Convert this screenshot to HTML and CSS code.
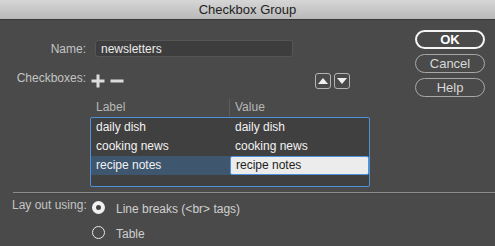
FILE: index.html
```html
<!DOCTYPE html>
<html>
<head>
<meta charset="utf-8">
<link rel="stylesheet" href="styles.css">
</head>
<body>
<div class="titlebar">Checkbox Group</div>
<div class="content">
  <div class="top">
    <div class="form">
      <div class="row name-row">
        <span class="lbl">Name:</span>
        <div class="input">newsletters</div>
      </div>
      <div class="row cb-row">
        <span class="lbl cb-lbl">Checkboxes:</span>
        <div class="pm">
          <svg class="plus" width="14" height="14" viewBox="0 0 14 14"><path d="M7 0.5V13.5M0.5 7H13.5" stroke="#dcdcdc" stroke-width="3"/></svg>
          <svg class="minus" width="14" height="14" viewBox="0 0 14 14"><path d="M0.5 7H13.5" stroke="#dcdcdc" stroke-width="3"/></svg>
        </div>
        <div class="arrows">
          <div class="abtn"><svg width="10" height="6" viewBox="0 0 10 6"><path d="M0 6L5 0L10 6Z" fill="#f0f0f0"/></svg></div>
          <div class="abtn"><svg width="10" height="6" viewBox="0 0 10 6"><path d="M0 0L5 6L10 0Z" fill="#f0f0f0"/></svg></div>
        </div>
      </div>
      <div class="row grid-row">
        <span class="lbl"></span>
        <div class="grid">
          <div class="headers">
            <span class="h-label">Label</span>
            <span class="h-value">Value</span>
          </div>
          <div class="list">
            <div class="lrow"><span class="c1">daily dish</span><span class="c2">daily dish</span></div>
            <div class="lrow"><span class="c1">cooking news</span><span class="c2">cooking news</span></div>
            <div class="lrow sel"><span class="c1">recipe notes</span><span class="c2 edit">recipe notes</span></div>
          </div>
        </div>
      </div>
    </div>
    <div class="buttons">
      <div class="btn default">OK</div>
      <div class="btn">Cancel</div>
      <div class="btn">Help</div>
    </div>
  </div>
  <div class="sep"></div>
  <div class="layout">
    <span class="lay-lbl">Lay out using:</span>
    <div class="radios">
      <div class="radio-row"><span class="radio on"></span><span class="rtext">Line breaks (&lt;br&gt; tags)</span></div>
      <div class="radio-row r2"><span class="radio"></span><span class="rtext">Table</span></div>
    </div>
  </div>
</div>
</body>
</html>
```

FILE: styles.css
```css
* { box-sizing: border-box; }
html, body { margin: 0; padding: 0; }
body {
  width: 495px;
  height: 246px;
  overflow: hidden;
  background: #4a4a4a;
  font-family: "Liberation Sans", Arial, sans-serif;
  font-size: 12px;
  color: #e6e6e6;
}
.titlebar {
  height: 20px;
  line-height: 19px;
  text-align: center;
  font-size: 13px;
  color: #1e1e1e;
  background: linear-gradient(#d6d6d6, #b9b9b9);
  border-bottom: 1px solid #3a3a3a;
}
.top {
  display: flex;
  justify-content: space-between;
}
.form {
  padding-top: 20px;
  width: 380px;
}
.row {
  display: flex;
  align-items: center;
}
.lbl {
  width: 86px;
  flex: none;
  text-align: right;
  color: #c4c4c4;
}
.name-row { height: 17px; }
.input {
  margin-left: 9px;
  width: 198px;
  height: 17px;
  line-height: 16px;
  padding-left: 5px;
  background: #3d3d3d;
  border: 1px solid #555;
  border-radius: 3px;
  color: #ececec;
}
.cb-row {
  margin-top: 16px;
  height: 16px;
}
.cb-lbl { position: relative; top: -3px; }
.pm {
  display: flex;
  gap: 5px;
  margin-left: 5px;
}
.pm svg { display: block; }
.arrows {
  display: flex;
  gap: 3px;
  margin-left: auto;
  margin-right: 30px;
}
.abtn {
  width: 16px;
  height: 16px;
  border: 1px solid #b4b4b4;
  border-radius: 3px;
  display: flex;
  align-items: center;
  justify-content: center;
}
.grid-row { margin-top: 10px; align-items: flex-start; }
.grid { margin-left: 4px; width: 280px; }
.headers {
  display: flex;
  height: 17px;
  line-height: 17px;
  color: #b8b8b8;
}
.h-label { width: 140px; padding-left: 6px; border-right: 1px solid #5e5e5e; }
.h-value { padding-left: 5px; }
.list {
  margin-top: 1px;
  height: 70px;
  border: 1px solid #4c93dc;
  border-radius: 2px;
  background: #404040;
  padding-top: 0;
}
.lrow {
  display: flex;
  height: 19px;
  line-height: 19px;
  color: #f2f2f2;
}
.c1 { width: 139px; padding-left: 5px; }
.c2 { flex: 1; padding-left: 5px; }
.sel .c1 { background: #3e566e; }
.sel .edit {
  background: #ececec;
  color: #1e1e1e;
  border: 1px solid #4c93dc;
  border-radius: 2px;
  line-height: 17px;
  padding-left: 5px;
}
.buttons {
  padding-top: 10px;
  padding-right: 10px;
  display: flex;
  flex-direction: column;
  gap: 5px;
}
.btn {
  width: 70px;
  height: 19px;
  line-height: 17px;
  border: 1px solid #a8a8a8;
  border-radius: 10px;
  text-align: center;
  color: #d8d8d8;
  font-size: 13px;
}
.btn.default {
  border: 2px solid #f4f4f4;
  line-height: 15px;
  color: #ffffff;
  font-weight: bold;
}
.sep {
  margin-top: 5px;
  margin-left: 13px;
  height: 2px;
  border-top: 1px solid #8e8e8e;
  border-bottom: 1px solid #444;
}
.layout {
  display: flex;
  padding-top: 5px;
}
.lay-lbl {
  width: 92px;
  flex: none;
  padding-left: 12px;
  white-space: nowrap;
  color: #c4c4c4;
  position: relative;
  top: -1px;
}
.radios { margin-left: 0; }
.radio-row {
  display: flex;
  align-items: center;
  height: 16px;
}
.r2 { margin-top: 9px; }
.radio {
  width: 13px;
  height: 13px;
  border-radius: 50%;
  border: 1.5px solid #e8e8e8;
  flex: none;
}
.radio.on { border: 4px solid #f0f0f0; background: #444; }
.rtext { margin-left: 11px; color: #d0d0d0; position: relative; top: 2px; }
```
